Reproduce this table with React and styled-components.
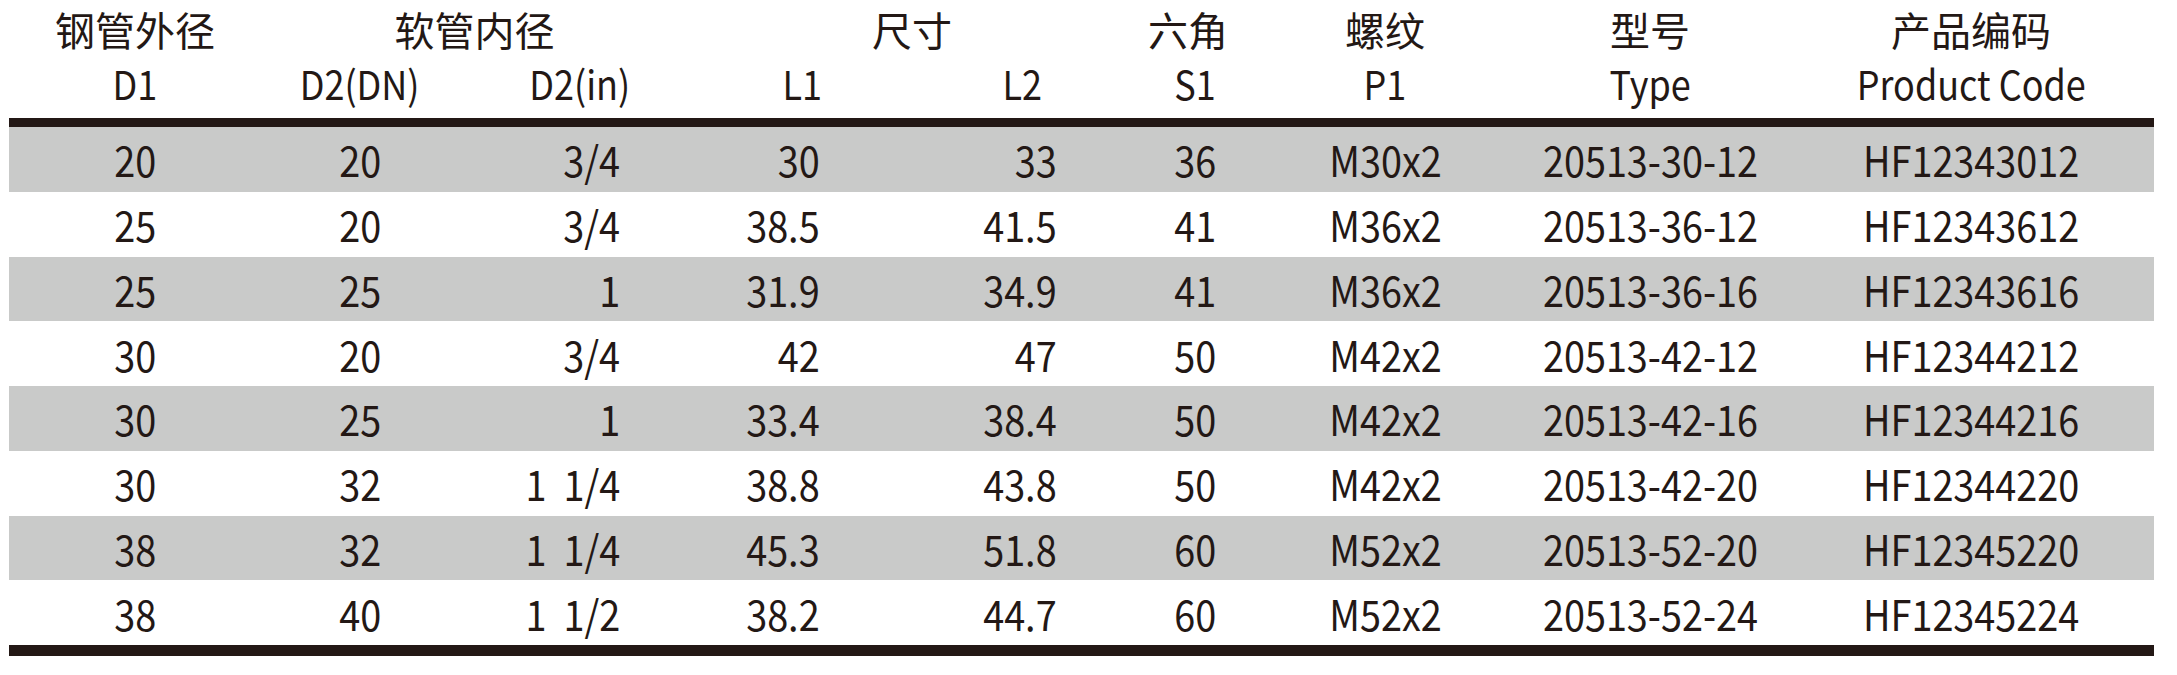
import React from 'react'
import styled, { createGlobalStyle } from 'styled-components'

const GlobalStyle = createGlobalStyle`
  body {
    margin: 0;
    background: #ffffff;
    font-family: "Noto Sans CJK SC", "Noto Sans", sans-serif;
    color: #231815;
  }
`

const COLS = '252px 198px 201px 200px 240px 190px 190px 340px 334px'

const Table = styled.div`
  width: 2145px;
  margin-left: 9px;
`

const Head = styled.div`
  display: grid;
  grid-template-columns: ${COLS};
  grid-template-rows: 58px 60px;
  border-bottom: 9px solid #231815;
`

const Body = styled.div`
  border-bottom: 11px solid #231815;
`

const Row = styled.div`
  display: grid;
  grid-template-columns: ${COLS};
  height: 64.75px;
  background: ${(p) => (p.$shade ? '#c9cac9' : 'transparent')};
`

const Cell = styled.div`
  display: flex;
  align-items: center;
  justify-content: ${(p) => (p.$align === 'right' ? 'flex-end' : 'center')};
  padding-left: ${(p) => p.$pl || 0}px;
  padding-right: ${(p) => p.$pr || 0}px;
  font-size: 42px;
  line-height: 1;
  white-space: pre;
  grid-column: ${(p) => p.$span || 'auto'};
`

const Title = styled(Cell)`
  font-size: 40px;
  grid-row: 1;
`

const Sub = styled(Cell)`
  grid-row: 2;
  font-size: 40px;
  padding-bottom: 10px;
`

// the sheet's Latin figures are a narrow cut, so squeeze them a little
const Narrow = styled.span`
  display: inline-block;
  transform: scaleX(0.9);
  transform-origin: ${(p) => (p.$align === 'right' ? 'right' : 'center')} center;
`

const titles = [
  { text: '钢管外径', span: '1 / 2' },
  { text: '软管内径', span: '2 / 4', pl: 28 },
  { text: '尺寸', span: '4 / 6', pl: 64 },
  { text: '六角', span: '6 / 7', pr: 14 },
  { text: '螺纹', span: '7 / 8' },
  { text: '型号', span: '8 / 9' },
  { text: '产品编码', span: '9 / 10', pr: 32 },
]

const cols = [
  { key: 'd1', label: 'D1' },
  { key: 'dn', label: 'D2(DN)' },
  { key: 'din', label: 'D2(in)', align: 'right', pr: 40, hpr: 30 },
  { key: 'l1', label: 'L1', align: 'right', pr: 40, hpr: 38 },
  { key: 'l2', label: 'L2', align: 'right', pr: 43, hpr: 58 },
  { key: 's1', label: 'S1' },
  { key: 'p1', label: 'P1' },
  { key: 'type', label: 'Type' },
  { key: 'code', label: 'Product Code', pr: 32 },
]

const rows = [
  ['20', '20', '3/4', '30', '33', '36', 'M30x2', '20513-30-12', 'HF12343012'],
  ['25', '20', '3/4', '38.5', '41.5', '41', 'M36x2', '20513-36-12', 'HF12343612'],
  ['25', '25', '1', '31.9', '34.9', '41', 'M36x2', '20513-36-16', 'HF12343616'],
  ['30', '20', '3/4', '42', '47', '50', 'M42x2', '20513-42-12', 'HF12344212'],
  ['30', '25', '1', '33.4', '38.4', '50', 'M42x2', '20513-42-16', 'HF12344216'],
  ['30', '32', '1  1/4', '38.8', '43.8', '50', 'M42x2', '20513-42-20', 'HF12344220'],
  ['38', '32', '1  1/4', '45.3', '51.8', '60', 'M52x2', '20513-52-20', 'HF12345220'],
  ['38', '40', '1  1/2', '38.2', '44.7', '60', 'M52x2', '20513-52-24', 'HF12345224'],
]

export default function App() {
  return (
    <>
      <GlobalStyle />
      <Table>
        <Head>
          {titles.map((t) => (
            <Title key={t.text} $span={t.span} $pl={t.pl} $pr={t.pr}>
              {t.text}
            </Title>
          ))}
          {cols.map((c) => (
            <Sub key={c.key} $align={c.align} $pr={c.hpr ?? c.pr}>
              <Narrow $align={c.align}>{c.label}</Narrow>
            </Sub>
          ))}
        </Head>
        <Body>
          {rows.map((r, i) => (
            <Row key={i} $shade={i % 2 === 0}>
              {r.map((v, j) => (
                <Cell key={j} $align={cols[j].align} $pr={cols[j].pr}>
                  <Narrow $align={cols[j].align}>{v}</Narrow>
                </Cell>
              ))}
            </Row>
          ))}
        </Body>
      </Table>
    </>
  )
}
